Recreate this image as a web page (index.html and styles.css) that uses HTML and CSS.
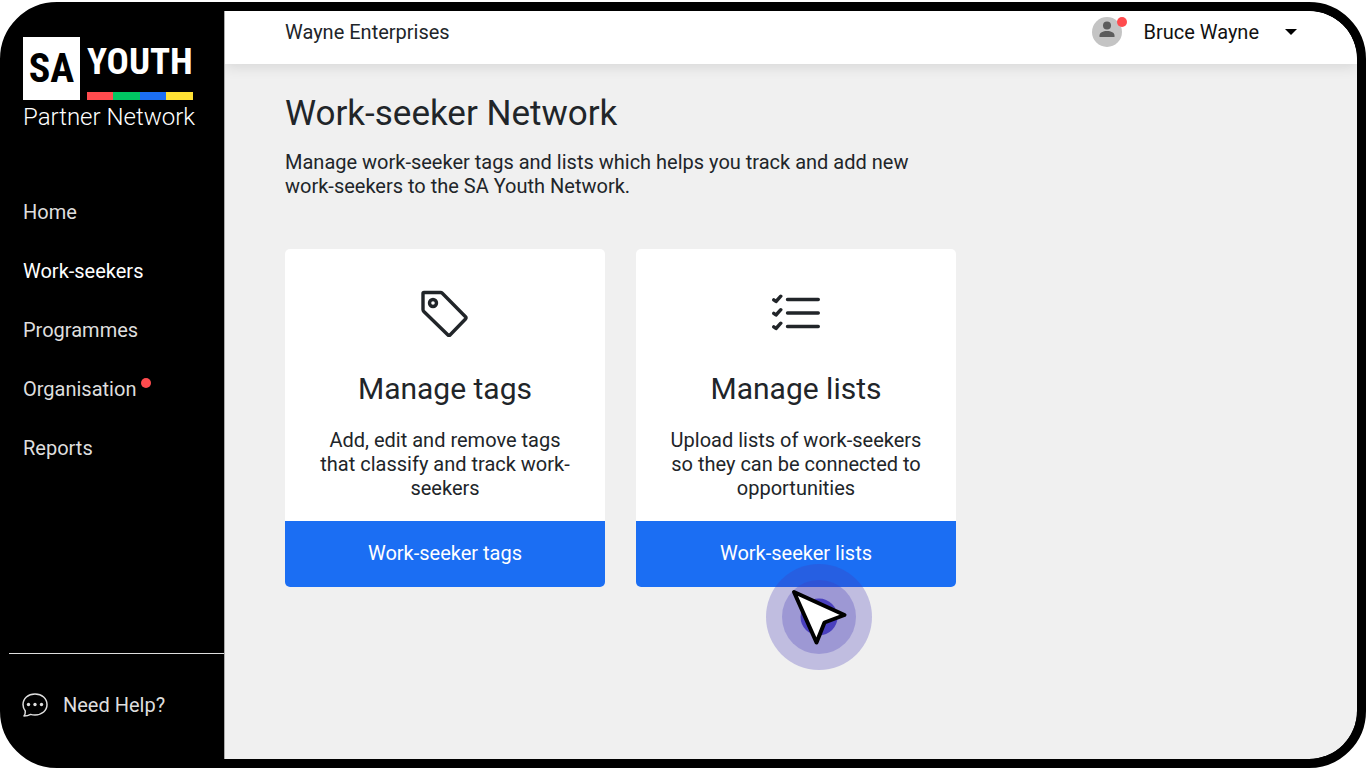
FILE: index.html
```html
<!DOCTYPE html>
<html lang="en">
<head>
  <meta charset="UTF-8" />
  <meta name="viewport" content="width=device-width, initial-scale=1.0"/>
  <title>SA Youth Partner Network</title>

  <link rel="stylesheet" href="styles.css">
</head>
<body>
  <div class="frame">
    <aside class="sidebar">
      <a href="#" class="logo">
        <span class="logo-mark">
          <span class="logo-sa">SA</span>
          <span class="logo-youth">
            <span class="logo-word">YOUTH</span>
            <span class="logo-bar"></span>
          </span>
        </span>
        <span class="logo-sub">Partner Network</span>
      </a>

      <nav class="nav">
        <a href="#">Home</a>
        <a href="#" class="active">Work-seekers</a>
        <a href="#">Programmes</a>
        <a href="#">Organisation<span class="dot"></span></a>
        <a href="#">Reports</a>
      </nav>

      <a href="#" class="help">
        <svg width="26" height="24" viewBox="0 0 26 24" fill="none" stroke="currentColor" stroke-width="1.5">
          <path d="M2 23 C3.2 21.5 3.4 19.5 3.3 18 C1.8 16.2 1 14 1 11.6 C1 5.6 6 1 13 1 S25 5.6 25 11.6 S20 22 13 22 C11.4 22 9.9 21.8 8.6 21.4 C6.8 22.4 4.2 23 2 23 Z" stroke-linejoin="round"/>
          <g fill="currentColor" stroke="none">
            <circle cx="6.5" cy="11.5" r="1.7"/>
            <circle cx="13" cy="11.5" r="1.7"/>
            <circle cx="19.5" cy="11.5" r="1.7"/>
          </g>
        </svg>
        Need Help?
      </a>
    </aside>

    <div class="page">
      <header class="topbar">
        <span class="company">Wayne Enterprises</span>
        <button type="button" class="user">
          <span class="avatar">
            <svg width="30" height="30" viewBox="0 0 30 30">
              <circle cx="15" cy="15" r="15" fill="#c4c4c4"/>
              <circle cx="15" cy="8.5" r="4" fill="#5c5c5c"/>
              <path d="M7.5 20 V18.5 C7.5 15.5 11 14 15 14 S22.5 15.5 22.5 18.5 V20 Z" fill="#5c5c5c"/>
            </svg>
            <span class="dot"></span>
          </span>
          Bruce Wayne
          <span class="caret"></span>
        </button>
      </header>

      <main class="content">
        <h1>Work-seeker Network</h1>
        <p class="intro">Manage work-seeker tags and lists which helps you track and add new work-seekers to the SA Youth Network.</p>

        <div class="cards">
          <section class="card">
            <div class="card-body">
              <svg class="icon" width="48" height="48" viewBox="0 0 48 48" fill="none" stroke="currentColor" stroke-width="3.4" stroke-linejoin="round">
                <path d="M2 4.5 Q2 3.5 3 3.5 H19.5 Q20.5 3.5 21.3 4.3 L44.5 27.7 Q45.5 28.8 44.5 30 L29 46 Q28 47 27 46 L2.8 22.5 Q2 21.7 2 20.5 Z"/>
                <circle cx="12" cy="14" r="3.5"/>
              </svg>
              <h2>Manage tags</h2>
              <p>Add, edit and remove tags that classify and track work-seekers</p>
            </div>
            <button type="button">Work-seeker tags</button>
          </section>

          <section class="card">
            <div class="card-body">
              <svg class="icon" width="48" height="48" viewBox="0 0 48 48" fill="none" stroke="currentColor" stroke-width="3.4" stroke-linecap="round" stroke-linejoin="round">
                <path d="M15.5 10.5 H46.3 M15.5 24 H46.3 M15.5 37.5 H46.3"/>
                <path d="M1.8 10.8 L4 12.5 L8.8 7.2 M1.8 24.3 L4 26 L8.8 20.7 M1.8 37.8 L4 39.5 L8.8 34.2"/>
              </svg>
              <h2>Manage lists</h2>
              <p>Upload lists of work-seekers so they can be connected to opportunities</p>
            </div>
            <button type="button">Work-seeker lists</button>

            <svg class="pointer" width="106" height="106" viewBox="0 0 106 106">
              <circle cx="53" cy="53" r="53" fill="#4338b8" fill-opacity="0.28"/>
              <circle cx="53" cy="53" r="37" fill="#4338b8" fill-opacity="0.28"/>
              <circle cx="53" cy="53" r="18.5" fill="#4a40be"/>
              <path d="M28 28 L78.5 51 L58.5 58.5 L50.5 78.5 Z" fill="#fff" stroke="#000" stroke-width="4" stroke-linejoin="round"/>
            </svg>
          </section>
        </div>
      </main>
    </div>
  </div>
</body>
</html>
```
FILE: styles.css
```css
* {
  box-sizing: border-box;
}
body {
  font-family: Roboto, Arial, sans-serif;
  font-size: 20px;
  line-height: 24px;
  margin: 0;
  padding-top: 2px;
  background: #fff;
  color: #212529;
}
a {
  color: inherit;
  text-decoration: none;
}
h1, h2, p {
  margin: 0;
  font-weight: 400;
}
button {
  font: inherit;
  border: none;
  cursor: pointer;
}
.frame {
  display: grid;
  grid-template-columns: 216px 1fr;
  min-height: calc(100vh - 2px);
  border: 9px solid #000;
  border-radius: 57px;
  background: #000;
  overflow: hidden;
}

/* sidebar */
.sidebar {
  display: flex;
  flex-direction: column;
  padding-top: 26px;
  border-right: 1px solid #aaa;
  background: #000;
  color: #dedede;
}
.logo {
  display: block;
  padding-left: 14px;
  color: #fff;
}
.logo-mark {
  display: flex;
  gap: 7px;
}
.logo-sa {
  display: flex;
  align-items: center;
  justify-content: center;
  width: 57px;
  height: 63px;
  background: #fff;
  color: #000;
  font-family: "Roboto Condensed", "Liberation Sans Narrow", Roboto, sans-serif;
  font-size: 40px;
  font-weight: 700;
}
.logo-youth {
  display: flex;
  flex-direction: column;
  width: 106px;
}
.logo-word {
  height: 55px;
  font-family: "Roboto Condensed", "Liberation Sans Narrow", Roboto, sans-serif;
  font-size: 37px;
  font-weight: 700;
  line-height: 50px;
}
.logo-bar {
  height: 8px;
  background: linear-gradient(90deg, #ff4b4e 25%, #00c662 25% 50%, #1b6ef3 50% 75%, #ffe134 75%);
}
.logo-sub {
  display: block;
  margin-top: 5px;
  font-size: 24px;
  font-weight: 300;
  white-space: nowrap;
}
.nav {
  display: flex;
  flex-direction: column;
  gap: 35px;
  padding: 71px 14px 35px;
}
.nav .active {
  color: #fff;
}
.dot {
  display: inline-block;
  width: 10px;
  height: 10px;
  border-radius: 50%;
  background: #ff4b4e;
}
.nav .dot {
  margin-left: 5px;
  vertical-align: 8px;
}
.help {
  display: flex;
  align-items: center;
  gap: 15px;
  height: 106px;
  margin-top: auto;
  padding: 0 0 3px 13px;
  border-top: 1px solid #dedede;
}

/* page */
.page {
  min-width: 0;
  background: #f0f0f0;
  border-radius: 0 48px 48px 0;
  overflow: hidden;
}
.topbar {
  display: flex;
  align-items: center;
  justify-content: space-between;
  height: 53px;
  padding: 0 60px;
  padding-bottom: 11px;
  background: #fff;
  box-shadow: 0 2px 14px rgba(0, 0, 0, 0.12);
}
.user {
  display: flex;
  align-items: center;
  padding: 0;
  background: none;
  color: #111;
}
.avatar {
  position: relative;
  height: 30px;
  margin-right: 21px;
}
.avatar svg {
  display: block;
}
.avatar .dot {
  position: absolute;
  top: 0;
  right: -5px;
}
.caret {
  margin-left: 26px;
  border: 6px solid transparent;
  border-top-color: #000;
  border-bottom: 0;
}
.content {
  padding: 28px 60px;
}
h1 {
  font-size: 35px;
  line-height: 44px;
}
.intro {
  max-width: 660px;
  margin-top: 14px;
}
.cards {
  display: flex;
  flex-wrap: wrap;
  gap: 31px;
  margin-top: 51px;
}
.card {
  position: relative;
  display: flex;
  flex-direction: column;
  width: 320px;
  border-radius: 5px;
  background: #fff;
  text-align: center;
}
.card-body {
  flex: 1;
  padding: 40px 30px 21px;
}
.icon {
  display: block;
  margin: 0 auto;
}
h2 {
  margin: 34px 0 21px;
  font-size: 30px;
  line-height: 36px;
}
.card button {
  height: 66px;
  padding-bottom: 3px;
  border-radius: 0 0 5px 5px;
  background: #1b6ef3;
  color: #fff;
}
.pointer {
  position: absolute;
  left: 130px;
  bottom: -83px;
  pointer-events: none;
}
```
